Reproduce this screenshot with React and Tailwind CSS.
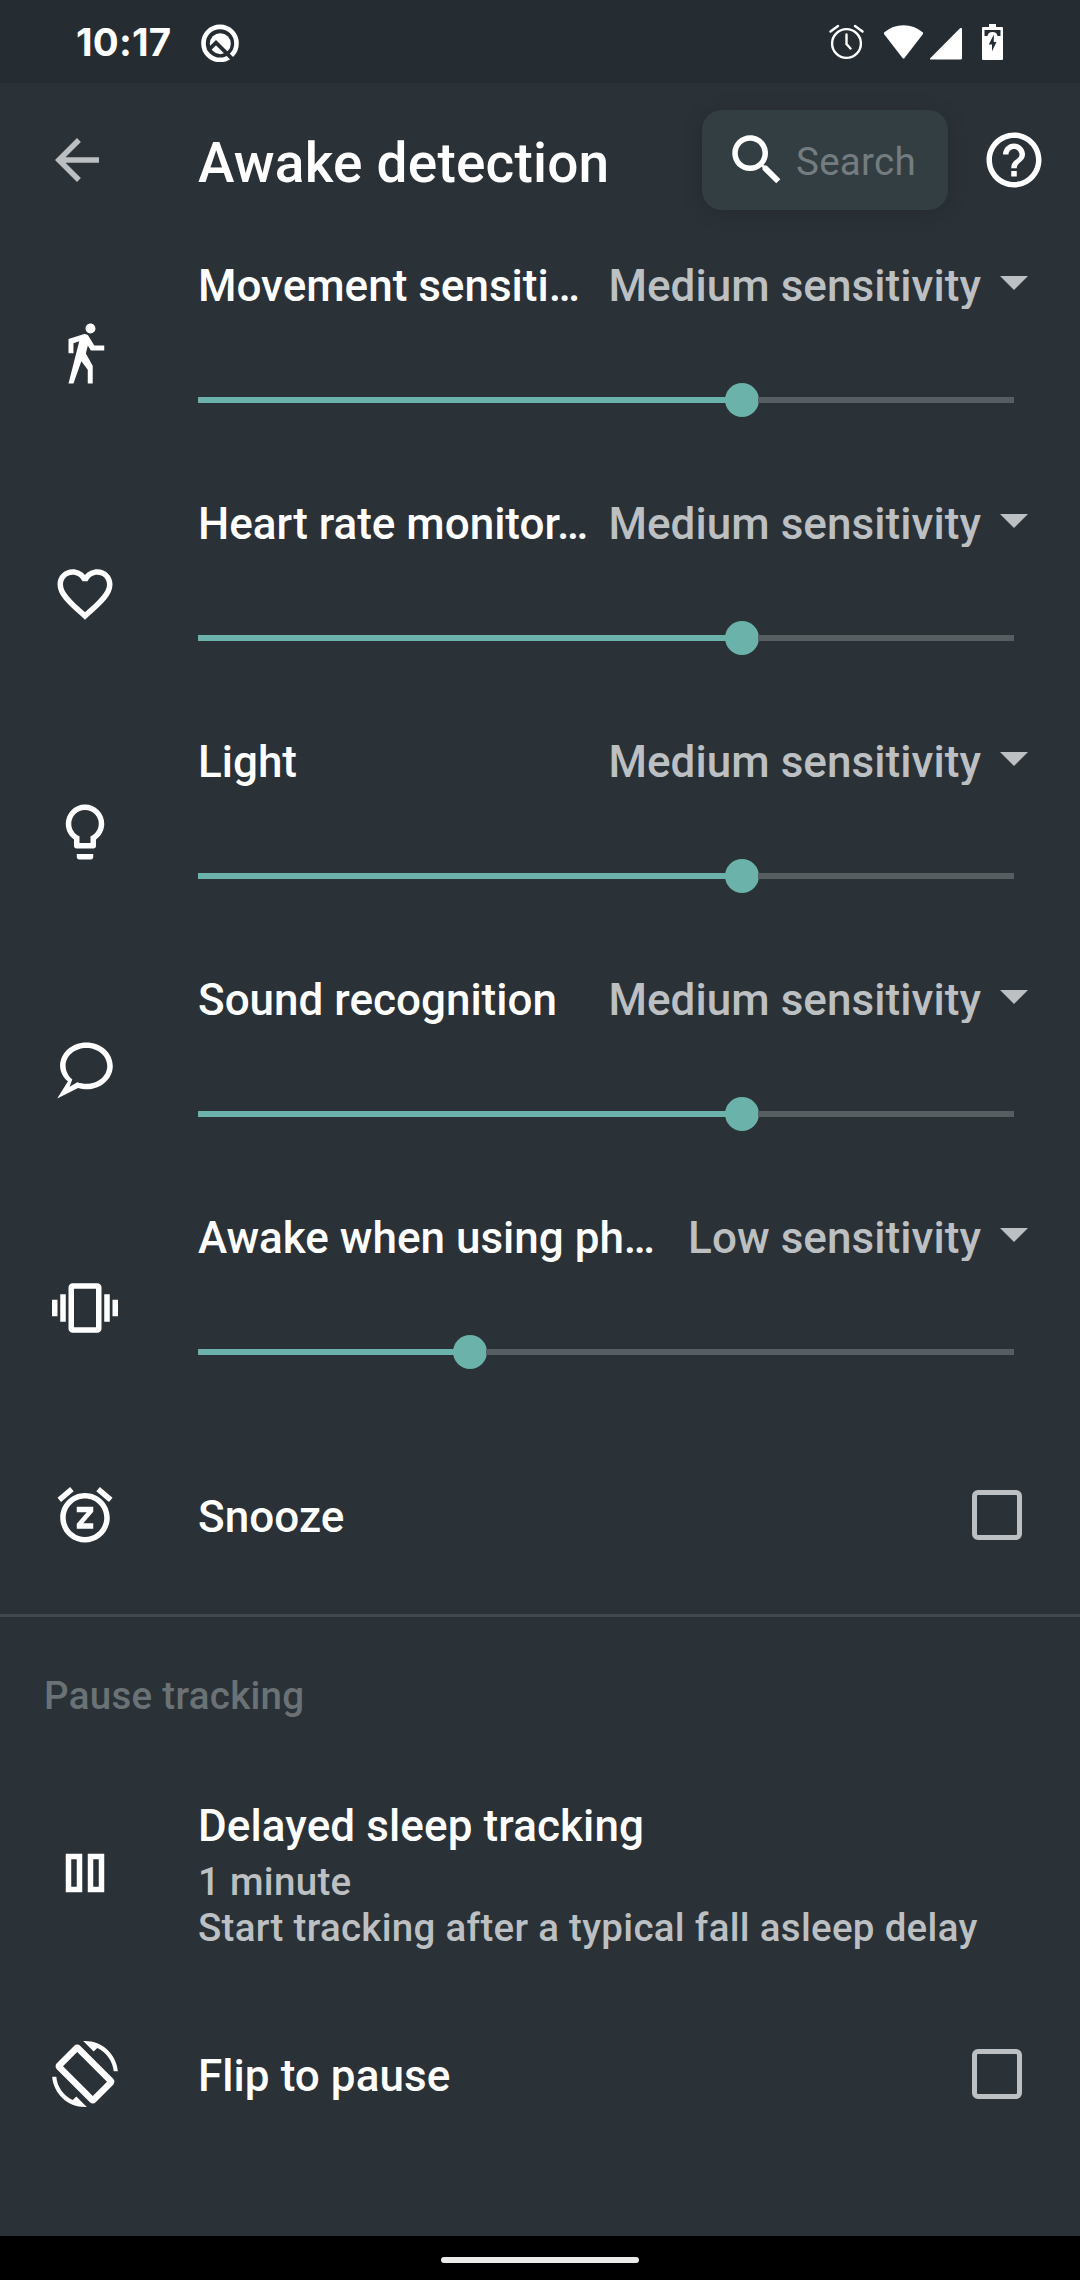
import React from "react";

const PATHS = {
  back: "M20 11H7.83l5.59-5.59L12 4l-8 8 8 8 1.41-1.41L7.83 13H20v-2z",
  search:
    "M15.5 14h-.79l-.28-.27C15.41 12.59 16 11.11 16 9.5 16 5.91 13.09 3 9.5 3S3 5.91 3 9.5 5.91 16 9.5 16c1.61 0 3.09-.59 4.23-1.57l.27.28v.79l5 4.99L20.49 19l-4.99-5zm-6 0C7.01 14 5 11.99 5 9.5S7.01 5 9.5 5 14 7.01 14 9.5 11.99 14 9.5 14z",
  help: "M11 18h2v-2h-2v2zm1-16C6.48 2 2 6.48 2 12s4.48 10 10 10 10-4.48 10-10S17.52 2 12 2zm0 18c-4.41 0-8-3.59-8-8s3.59-8 8-8 8 3.59 8 8-3.59 8-8 8zm0-14c-2.21 0-4 1.79-4 4h2c0-1.1.9-2 2-2s2 .9 2 2c0 2-3 1.75-3 5h2c0-2.25 3-2.5 3-5 0-2.21-1.79-4-4-4z",
  walk: "M14.12,10H19V8.2H15.38L13.38,4.87C13.08,4.37 12.54,4.03 11.92,4.03C11.74,4.03 11.58,4.06 11.42,4.11L6,5.8V11H7.8V7.33L9.91,6.67L6,22H7.8L10.67,13.89L13,17V22H14.8V15.59L12.31,11.05L13.04,8.18M14,3.8C15,3.8 15.8,3 15.8,2C15.8,1 15,0.2 14,0.2C13,0.2 12.2,1 12.2,2C12.2,3 13,3.8 14,3.8Z",
  heart:
    "M16.5 3c-1.74 0-3.41.81-4.5 2.09C10.91 3.81 9.24 3 7.5 3 4.42 3 2 5.42 2 8.5c0 3.78 3.4 6.86 8.55 11.54L12 21.35l1.45-1.32C18.6 15.36 22 12.28 22 8.5 22 5.42 19.58 3 16.5 3zm-4.4 15.55l-.1.1-.1-.1C7.14 14.24 4 11.39 4 8.5 4 6.5 5.5 5 7.5 5c1.54 0 3.04.99 3.57 2.36h1.87C13.46 5.99 14.96 5 16.5 5c2 0 3.5 1.5 3.5 3.5 0 2.89-3.14 5.74-7.9 10.05z",
  bulb: "M12,2A7,7 0 0,1 19,9C19,11.38 17.81,13.47 16,14.74V17A1,1 0 0,1 15,18H9A1,1 0 0,1 8,17V14.74C6.19,13.47 5,11.38 5,9A7,7 0 0,1 12,2M9,21V20H15V21A1,1 0 0,1 14,22H10A1,1 0 0,1 9,21M12,4A5,5 0 0,0 7,9C7,11.05 8.23,12.81 10,13.58V16H14V13.58C15.77,12.81 17,11.05 17,9A5,5 0 0,0 12,4Z",
  vibrate:
    "M16,19H8V5H16M16.5,3H7.5A1.5,1.5 0 0,0 6,4.5V19.5A1.5,1.5 0 0,0 7.5,21H16.5A1.5,1.5 0 0,0 18,19.5V4.5A1.5,1.5 0 0,0 16.5,3M19,17H21V7H19M22,15H24V9H22M3,17H5V7H3M0,15H2V9H0V15Z",
  snooze:
    "M7.88 3.39L6.6 1.86 2 5.71l1.29 1.53 4.59-3.85zM22 5.72l-4.6-3.86-1.29 1.53 4.6 3.86L22 5.72zM12 4c-4.97 0-9 4.03-9 9s4.02 9 9 9c4.97 0 9-4.03 9-9s-4.03-9-9-9zm0 16c-3.87 0-7-3.13-7-7s3.13-7 7-7 7 3.13 7 7-3.13 7-7 7zm-3-9h3.63L9 15.2V17h6v-2h-3.63L15 10.8V9H9v2z",
  pause: "M5 5h6v14H5zM7 7v10h2V7zM13 5h6v14h-6zM15 7v10h2V7z",
  chat: "M12.5 2C7.2 2 2.95 5.8 2.95 10.5C2.95 12.7 4.1 14.700 5.8 16.1L1.9 22.4L9.5 18.5C10.45 18.8 11.45 19 12.5 19C17.8 19 22.1 15.2 22.1 10.5C22.1 5.8 17.8 2 12.5 2ZM12.5 4C16.7 4 20.1 6.9 20.1 10.5C20.1 14.1 16.7 17 12.5 17C11.4 17 10.2 16.8 9.200 16.45L6.4 18.1L7.400 15.4C5.9 14.200 4.95 12.3 4.95 10.5C4.95 6.9 8.3 4 12.5 4Z",
  rotate:
    "M16.48 2.52c3.27 1.55 5.61 4.72 5.97 8.48h1.5C23.44 4.84 18.29 0 12 0l-.66.03 3.81 3.81 1.33-1.32zm-6.25-.77c-.59-.59-1.54-.59-2.12 0L1.75 8.11c-.59.59-.59 1.54 0 2.12l12.02 12.02c.59.59 1.54.59 2.12 0l6.36-6.36c.59-.59.59-1.54 0-2.12L10.23 1.75zM14.830 20L4 9.170L9.170 4L20 14.830zM7.52 21.48C4.25 19.94 1.91 16.76 1.55 13H.05C.56 19.16 5.71 24 12 24l.66-.03-3.81-3.81-1.33 1.32z",
};

function Icon({ name, className = "text-white" }) {
  return (
    <svg viewBox="0 0 24 24" className={`size-[66px] shrink-0 ${className}`} fill="currentColor" fillRule="evenodd">
      <path d={PATHS[name]} />
    </svg>
  );
}

function StatusBar() {
  return (
    <div className="flex h-[83px] shrink-0 items-center bg-[#252c32] pl-[76px] pr-[77px] text-white">
      <span className="w-[125px] font-['Inter'] text-[38.5px] font-bold leading-[46px] tracking-[0.2px]">10:17</span>
      <svg className="h-10 w-10" viewBox="0 0 40 40" fill="none">
        <circle cx="19" cy="21.400" r="16.500" stroke="#fff" strokeWidth="4.600" />
        <circle cx="19.300" cy="21.700" r="10.500" fill="#fff" />
        <path d="M7 28.600L15 20.600L33 38.600" stroke="#252c32" strokeWidth="3.800" />
      </svg>
      <div className="flex-1" />
      <svg className="h-9 w-[35px]" viewBox="0 0 35 36" fill="none" stroke="#fff" strokeWidth="2.400" strokeLinecap="round">
        <circle cx="17.500" cy="19.500" r="14.400" />
        <path d="M1.500 7.500L9 2M33.500 7.500L26 2M17.500 10.500V20l4 4.500" />
      </svg>
      <svg className="ml-5 h-9 w-[39px]" viewBox="0 0 39 36" fill="#fff">
        <path d="M0 8.500Q8.500 1.200 19.500 1.200T39 8.500V10L20.500 34q-1 1-2 0L0 10Z" />
      </svg>
      <svg className="ml-[7px] h-9 w-8" viewBox="0 0 32 36" fill="#fff">
        <path d="M0 34.500L30 4.300q2-1.500 2 1V34q0 1.500-1.500 1.500H1Q-.5 35.500 0 34.500Z" />
      </svg>
      <svg className="ml-5 h-9 w-[21px]" viewBox="0 0 21 36">
        <path d="M7 0h7v3h6q1 0 1 1v31q0 1-1 1H1q-1 0-1-1V4q0-1 1-1h6z" fill="#fff" />
        <path d="M2.500 6h16v6h-3q-.5-4-5-4t-5 4h-3z" fill="#252c32" />
        <path d="M11.800 10.500L6.800 20.500H10v6.800L14.500 18h-2.700z" fill="#252c32" />
      </svg>
    </div>
  );
}

function AppBar() {
  return (
    <header className="flex h-[154px] shrink-0 items-center pl-11 pr-[33px]">
      <Icon name="back" className="text-[#bcbfc1]" />
      <h1 className="ml-[88px] w-[504px] pt-1.5 text-[55px] font-medium leading-[64px] tracking-[0.2px] text-white">
        Awake detection
      </h1>
      <div className="flex h-[100px] w-[246px] items-center rounded-[20px] bg-[#333e43] pl-[22px] shadow-[0_3px_22px_rgba(0,0,0,0.13)]">
        <Icon name="search" />
        <span className="ml-1.5 pt-[3px] text-[38.5px] leading-[46px] tracking-[0.3px] text-[#757c80]">Search</span>
      </div>
      <Icon name="help" className="ml-[33px] text-white" />
    </header>
  );
}

function SliderRow({ icon, title, value, level }) {
  return (
    <section className="flex h-[238px] shrink-0 items-center pl-[52px]">
      <Icon name={icon} />
      <div className="ml-20 flex h-full flex-1 flex-col pt-[23px]">
        <div className="flex h-[49px] whitespace-nowrap text-[44px] font-medium leading-[52px]">
          <span className="text-white">{title}</span>
          <span className="ml-auto h-[49px] overflow-hidden tracking-[0.06px] text-[#bdc0c2]">{value}</span>
          <svg className="ml-[19px] mr-[52px] mt-4 h-3.5 w-7" viewBox="0 0 28 14" fill="#bdc0c2">
            <path d="M0 0h28L14 14z" />
          </svg>
        </div>
        <div className="mt-[74px] flex h-[34px] w-[816px] items-center">
          <div className="h-1.5 bg-[#6bb2aa]" style={{ width: `calc(${level}% - 16px)` }} />
          <div className="-mx-px size-[34px] rounded-full bg-[#6bb2aa]" />
          <div className="h-1.5 flex-1 bg-[#575e61]" />
        </div>
      </div>
    </section>
  );
}

function CheckRow({ icon, title }) {
  return (
    <section className="flex h-[176px] shrink-0 items-center pl-[52px] pr-[58px]">
      <Icon name={icon} />
      <span className="ml-20 flex-1 pt-[3px] text-[44px] font-medium leading-[52px] tracking-[0.06px] text-white">
        {title}
      </span>
      <span className="size-[50px] rounded-[6px] border-[5.500px] border-[#bdc0c2]" />
    </section>
  );
}

const SLIDERS = [
  { icon: "walk", title: "Movement sensiti…", value: "Medium sensitivity", level: 66.667 },
  { icon: "heart", title: "Heart rate monitor…", value: "Medium sensitivity", level: 66.667 },
  { icon: "bulb", title: "Light", value: "Medium sensitivity", level: 66.667 },
  { icon: "chat", title: "Sound recognition", value: "Medium sensitivity", level: 66.667 },
  { icon: "vibrate", title: "Awake when using ph…", value: "Low sensitivity", level: 33.333 },
];

export default function App() {
  return (
    <div className="flex h-[2280px] w-[1080px] flex-col overflow-hidden bg-[#2a3137] font-['Roboto',sans-serif]">
      <StatusBar />
      <AppBar />
      {SLIDERS.map((s) => (
        <SliderRow key={s.title} {...s} />
      ))}
      <CheckRow icon="snooze" title="Snooze" />
      <div className="mt-[11px] h-[3px] shrink-0 bg-[#42494d]" />
      <h2 className="mt-14 pl-11 text-[38.5px] font-medium leading-[46px] tracking-[0.3px] text-[#6b7275]">
        Pause tracking
      </h2>
      <section className="mt-[81px] flex shrink-0 pl-[52px]">
        <div className="pt-10">
          <Icon name="pause" />
        </div>
        <div className="ml-20 text-[38.5px] font-medium leading-[46px] tracking-[0.29px] text-[#bdc0c2]">
          <p className="mb-[7px] text-[44px] leading-[52px] tracking-[0.1px] text-white">Delayed sleep tracking</p>
          <p>1 minute</p>
          <p>Start tracking after a typical fall asleep delay</p>
        </div>
      </section>
      <div className="mt-[35px]">
        <CheckRow icon="rotate" title="Flip to pause" />
      </div>
      <nav className="mt-auto flex h-11 shrink-0 items-center justify-center bg-black pt-1">
        <span className="h-1.5 w-[198px] rounded-[3px] bg-[#ebebea]" />
      </nav>
    </div>
  );
}
